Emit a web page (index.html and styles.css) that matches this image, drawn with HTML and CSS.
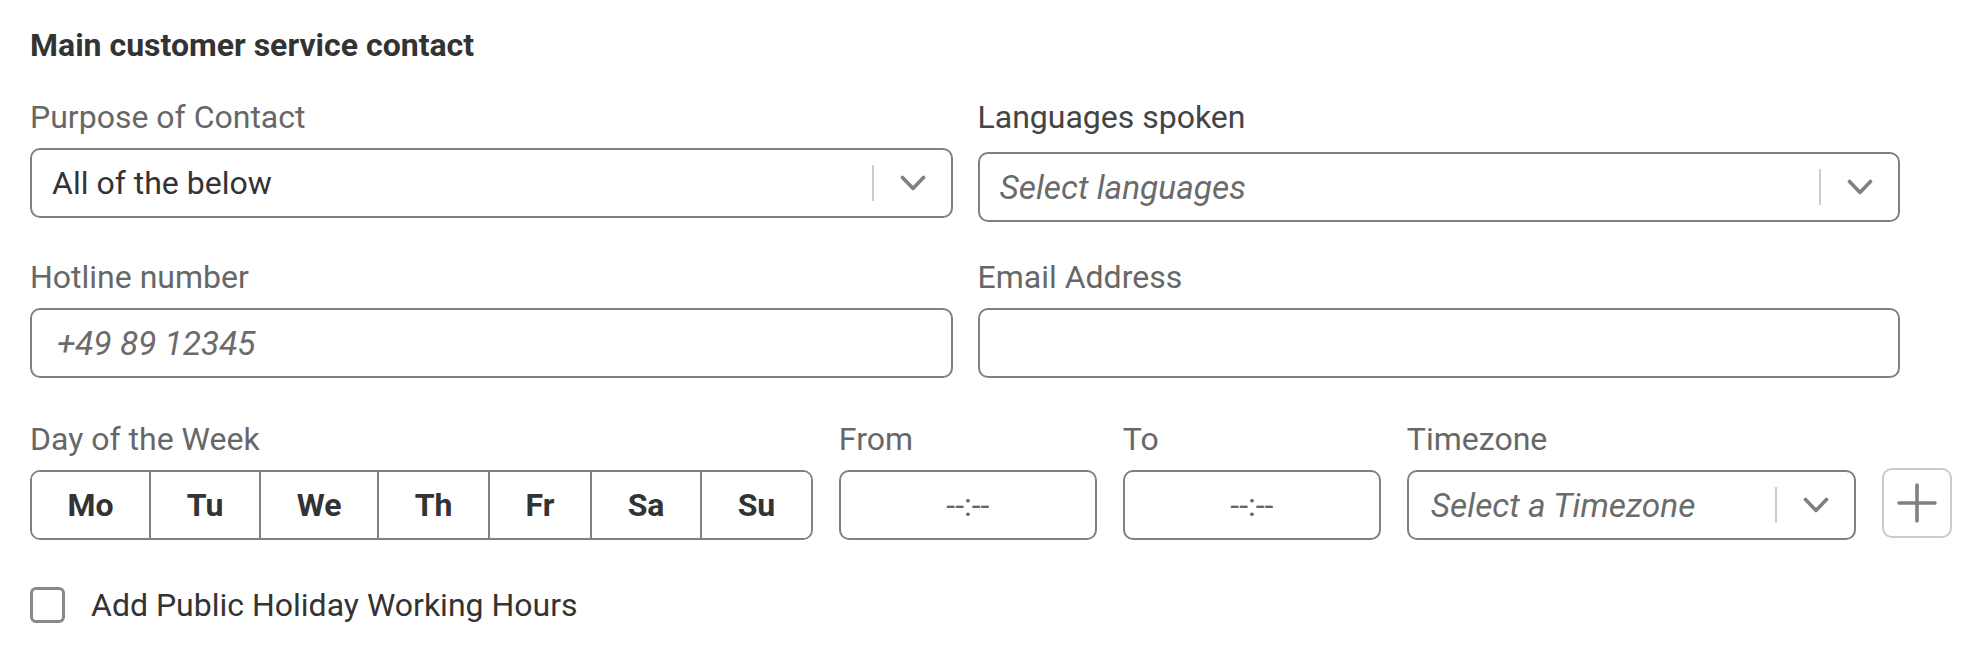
FILE: index.html
```html
<!DOCTYPE html>
<html lang="en">
<head>
<meta charset="utf-8">
<title>Main customer service contact</title>
<link rel="stylesheet" href="styles.css">
</head>
<body>
<div class="form">
  <h2 class="title">Main customer service contact</h2>

  <div class="row two first">
    <div class="field">
      <div class="label">Purpose of Contact</div>
      <div class="control select">
        <span class="value">All of the below</span>
        <span class="ind"><span class="sep"></span><svg class="chev" viewBox="0 0 26 16"><polyline points="2.5,2.5 13,13.5 23.5,2.5" fill="none" stroke="#808080" stroke-width="3.6" stroke-linecap="round" stroke-linejoin="round"/></svg></span>
      </div>
    </div>
    <div class="field">
      <div class="label dark">Languages spoken</div>
      <div class="control select">
        <span class="placeholder">Select languages</span>
        <span class="ind"><span class="sep"></span><svg class="chev" viewBox="0 0 26 16"><polyline points="2.5,2.5 13,13.5 23.5,2.5" fill="none" stroke="#808080" stroke-width="3.6" stroke-linecap="round" stroke-linejoin="round"/></svg></span>
      </div>
    </div>
  </div>

  <div class="row two second">
    <div class="field">
      <div class="label">Hotline number</div>
      <div class="control input"><span class="placeholder">+49 89 12345</span></div>
    </div>
    <div class="field">
      <div class="label">Email Address</div>
      <div class="control input"></div>
    </div>
  </div>

  <div class="row hours">
    <div class="field">
      <div class="label">Day of the Week</div>
      <div class="days">
        <button class="day">Mo</button>
        <button class="day">Tu</button>
        <button class="day">We</button>
        <button class="day">Th</button>
        <button class="day">Fr</button>
        <button class="day">Sa</button>
        <button class="day">Su</button>
      </div>
    </div>
    <div class="field time">
      <div class="label">From</div>
      <div class="control timebox">--:--</div>
    </div>
    <div class="field time">
      <div class="label">To</div>
      <div class="control timebox">--:--</div>
    </div>
    <div class="field tz">
      <div class="label">Timezone</div>
      <div class="control select tzsel">
        <span class="placeholder">Select a Timezone</span>
        <span class="ind"><span class="sep"></span><svg class="chev" viewBox="0 0 26 16"><polyline points="2.5,2.5 13,13.5 23.5,2.5" fill="none" stroke="#808080" stroke-width="3.6" stroke-linecap="round" stroke-linejoin="round"/></svg></span>
      </div>
    </div>
    <div class="field add">
      <div class="label">&nbsp;</div>
      <button class="plus" aria-label="Add"><svg viewBox="0 0 40 40" class="plus-icon"><path d="M20 2 V38 M2 20 H38" fill="none" stroke="#808080" stroke-width="3.6" stroke-linecap="round"/></svg></button>
    </div>
  </div>

  <label class="check"><span class="box"></span><span class="check-text">Add Public Holiday Working Hours</span></label>
</div>
</body>
</html>
```

FILE: styles.css
```css
* { box-sizing: border-box; }

body {
  margin: 0;
  background: #ffffff;
  font-family: Roboto, "Liberation Sans", Arial, sans-serif;
  color: #333333;
}

.form {
  width: 1954px;
  padding: 25px 0 0 30px;
}

.title {
  margin: 0;
  font-size: 32px;
  font-weight: 700;
  line-height: 40px;
  color: #333333;
}

.row {
  display: flex;
  margin-top: 39px;
}

.row.first {
  margin-top: 32px;
}

.row.second {
  margin-top: 35px;
}

.row.hours {
  margin-top: 41px;
  gap: 26px;
}

.row.two {
  width: 1870px;
  gap: 25px;
}

.row.two > .field {
  flex: 1 1 0;
}

.label {
  font-size: 32px;
  line-height: 40px;
  color: #676767;
  margin-bottom: 11px;
}

.label.dark {
  color: #444444;
  margin-bottom: 15px;
}

.control {
  height: 70px;
  border: 2px solid #808080;
  border-radius: 10px;
  display: flex;
  align-items: center;
  font-size: 32px;
  background: #ffffff;
}

.select {
  padding-left: 20px;
}

.value {
  flex: 1;
  color: #333333;
}

.placeholder {
  flex: 1;
  font-style: italic;
  font-size: 33.4px;
  color: #6b6b6b;
}

.ind {
  display: flex;
  align-items: center;
  height: 100%;
}

.sep {
  width: 2px;
  height: 36px;
  background: #cccccc;
}

.chev {
  width: 26px;
  height: 16px;
  margin: 0 25px 0 26px;
  display: block;
}

.input {
  padding-left: 25px;
}

.days {
  display: flex;
  height: 70px;
  border: 2px solid #808080;
  border-radius: 10px;
  overflow: hidden;
}

.day {
  margin: 0;
  border: none;
  border-left: 2px solid #808080;
  background: #ffffff;
  font-family: inherit;
  font-size: 32px;
  font-weight: 700;
  color: #333333;
  padding: 0 35.6px;
  display: flex;
  align-items: center;
}

.day:first-child {
  border-left: none;
}

.time .timebox {
  width: 258px;
  justify-content: center;
  color: #666666;
}

.tz .tzsel {
  width: 449px;
  padding-left: 22px;
}

.plus {
  width: 70px;
  height: 70px;
  margin: -2px 0 0 0;
  padding: 0;
  border: 2px solid #cacaca;
  border-radius: 10px;
  background: #ffffff;
  display: flex;
  align-items: center;
  justify-content: center;
}

.plus-icon {
  width: 40px;
  height: 40px;
  display: block;
}

.check {
  display: flex;
  align-items: center;
  gap: 26px;
  margin-top: 45px;
  font-size: 32px;
  line-height: 40px;
  color: #333333;
}

.box {
  width: 35px;
  height: 36px;
  border: 3px solid #888888;
  border-radius: 6px;
}
```
